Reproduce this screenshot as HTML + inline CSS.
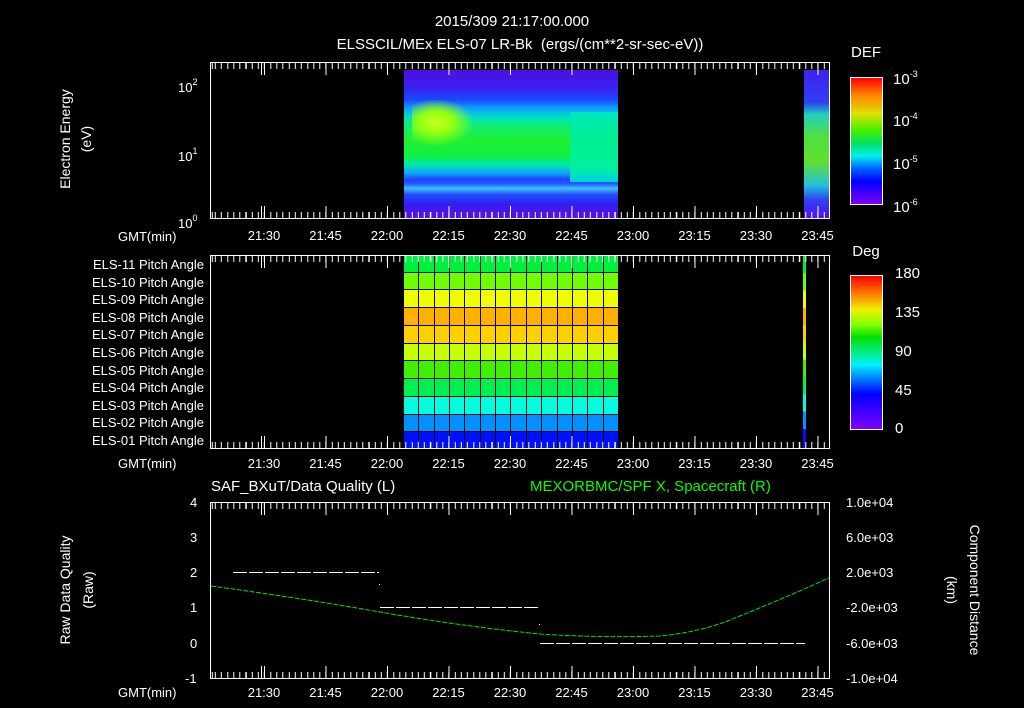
<!DOCTYPE html>
<html><head><meta charset="utf-8"><style>
body{margin:0;background:#000;width:1024px;height:708px;overflow:hidden;position:relative;font-family:"Liberation Sans",sans-serif;color:#fff}
.t{position:absolute;white-space:nowrap;font-size:13px;line-height:13px}
.c{transform:translateX(-50%)}
.frame{position:absolute;border:1px solid #fff;box-sizing:border-box}
.tk{position:absolute;left:0;right:0;height:6px;background-image:repeating-linear-gradient(to right,#fff 0 1px,transparent 1px 6.15px);background-position:3.8px 0}
.tm{position:absolute;left:0;right:0;height:12px;background-image:repeating-linear-gradient(to right,#fff 0 1px,transparent 1px 61.5px);background-position:53px 0}
.rot{position:absolute;transform:rotate(-90deg);transform-origin:center;white-space:nowrap;font-size:14px;text-align:center}
.rot2{position:absolute;transform:rotate(90deg);transform-origin:center;white-space:nowrap;font-size:14px;text-align:center}
sup{font-size:9px;vertical-align:7px}
</style></head><body>
<div class="t c" style="left:512px;top:15px;font-size:15px">2015/309 21:17:00.000</div>
<div class="t c" style="left:520px;top:38px;font-size:15px">ELSSCIL/MEx ELS-07 LR-Bk &nbsp;(ergs/(cm**2-sr-sec-eV))</div>

<!-- top panel -->
<div style="position:absolute;left:404px;top:70px;width:214px;height:148px;background:
linear-gradient(to bottom,#4a10e0 0%,#3a20f0 12%,#1848ff 20%,#10a0ff 26%,#00e0c0 32%,#10f070 38%,#20f030 48%,#10f040 58%,#00e8b0 64%,#10a0ff 70%,#2040ff 74%,#2060ff 77%,#40c0ff 80%,#2050ff 84%,#3020f0 90%,#5a10e0 100%)"></div>
<div style="position:absolute;left:412px;top:100px;width:60px;height:45px;background:radial-gradient(ellipse at 40% 50%,#c8ff20 0%,#90ff10 35%,rgba(60,255,40,0) 75%)"></div>
<div style="position:absolute;left:570px;top:112px;width:48px;height:70px;background:linear-gradient(#00e8c0,#00f090 40%,#00f0a0 80%,#00d0e0)"></div>
<div style="position:absolute;left:804px;top:70px;width:25px;height:148px;background:linear-gradient(to bottom,#4020f0 0%,#3040f0 22%,#20d0c0 30%,#50e040 45%,#60e030 62%,#20c0e0 78%,#3040f0 88%,#5010f0 100%)"></div>
<div class="frame" style="left:210px;top:62px;width:620px;height:157px">
 <div class="tk" style="top:0"></div><div class="tm" style="top:0"></div>
 <div class="tk" style="bottom:0"></div><div class="tm" style="bottom:0"></div>
</div>
<div class="t" style="left:178px;top:76px">10<sup>2</sup></div>
<div class="t" style="left:178px;top:145px">10<sup>1</sup></div>
<div class="t" style="left:178px;top:212px">10<sup>0</sup></div>
<div class="rot" style="left:5px;top:131px;width:120px">Electron Energy</div>
<div class="rot" style="left:56px;top:131px;width:60px">(eV)</div>
<div class="t" style="left:118px;top:230px">GMT(min)</div>
<div id="ax1"></div>

<div class="t c" style="left:866px;top:46px;font-size:15px">DEF</div>
<div style="position:absolute;left:850px;top:77px;width:33px;height:128px;box-sizing:border-box;border:1px solid #fff;background:linear-gradient(to bottom,#ff0000,#ff8000 13%,#e0e000 28%,#40f000 42%,#00e060 52%,#00f0f0 62%,#0060ff 72%,#0000ff 82%,#8000ff 100%)"></div>
<div class="t" style="left:893px;top:68px;font-size:15px">10<sup>-3</sup></div>
<div class="t" style="left:893px;top:110px;font-size:15px">10<sup>-4</sup></div>
<div class="t" style="left:893px;top:153px;font-size:15px">10<sup>-5</sup></div>
<div class="t" style="left:893px;top:196px;font-size:15px">10<sup>-6</sup></div>

<!-- pitch panel -->
<div style="position:absolute;left:404px;top:255px;width:214px;height:194px;display:grid;grid-template-columns:repeat(14,1fr);grid-template-rows:repeat(11,1fr);gap:1px;background:#000" id="grid"></div>
<div style="position:absolute;left:803px;top:256px;width:3px;height:192px;background:linear-gradient(to bottom,#00f040 0 9%,#70ff00 9% 18%,#f0ff00 18% 27%,#ffb000 27% 36%,#ffd000 36% 45%,#c8ff00 45% 54%,#40f000 54% 63%,#00f050 63% 72%,#00ffe0 72% 81%,#0090ff 81% 90%,#0010ff 90%)"></div>
<div class="frame" style="left:210px;top:255px;width:620px;height:194px">
 <div class="tk" style="top:0"></div><div class="tm" style="top:0"></div>
 <div class="tk" style="bottom:0"></div><div class="tm" style="bottom:0"></div>
</div>
<div id="pl"></div>
<div class="t" style="left:118px;top:457px">GMT(min)</div>
<div class="t c" style="left:866px;top:245px;font-size:15px">Deg</div>
<div style="position:absolute;left:850px;top:275px;width:33px;height:155px;box-sizing:border-box;border:1px solid #fff;background:linear-gradient(to bottom,#ff0000,#ff8000 12%,#f0f000 22%,#80ff00 32%,#00e000 40%,#00f0a0 52%,#00f0ff 58%,#0080ff 67%,#0000ff 77%,#8000ff 100%)"></div>
<div class="t" style="left:895px;top:267px;font-size:15px">180</div>
<div class="t" style="left:895px;top:306px;font-size:15px">135</div>
<div class="t" style="left:895px;top:345px;font-size:15px">90</div>
<div class="t" style="left:895px;top:384px;font-size:15px">45</div>
<div class="t" style="left:895px;top:422px;font-size:15px">0</div>

<!-- bottom panel -->
<div class="t" style="left:211px;top:480px;font-size:15px">SAF_BXuT/Data Quality (L)</div>
<div class="t" style="left:530px;top:480px;font-size:15px;color:#00ff00">MEXORBMC/SPF X, Spacecraft (R)</div>
<div class="frame" style="left:210px;top:502px;width:620px;height:177px">
 <div class="tk" style="top:0"></div><div class="tm" style="top:0"></div>
 <div class="tk" style="bottom:0"></div><div class="tm" style="bottom:0"></div>
</div>
<svg style="position:absolute;left:0;top:0" width="1024" height="708">
 <g stroke="#fff" stroke-width="1">
  <line x1="233" y1="572.5" x2="379" y2="572.5" stroke-dasharray="14,2"/>
  <line x1="380" y1="607.5" x2="539" y2="607.5" stroke-dasharray="14,2"/>
  <line x1="540" y1="643.5" x2="805" y2="643.5" stroke-dasharray="14,2"/>
 </g>
 <rect x="379" y="584" width="1" height="1" fill="#fff"/>
 <rect x="539" y="624" width="1" height="1" fill="#fff"/>
 <path d="M211 586 Q300 598 380 612 T540 634 Q600 638 660 636 Q700 632 730 620 Q780 600 829 578" fill="none" stroke="#00e000" stroke-width="1" stroke-dasharray="5,1.5"/>
</svg>
<div class="t" style="left:190px;top:496px">4</div>
<div class="t" style="left:190px;top:531px">3</div>
<div class="t" style="left:190px;top:566px">2</div>
<div class="t" style="left:190px;top:601px">1</div>
<div class="t" style="left:190px;top:637px">0</div>
<div class="t" style="left:185px;top:672px">-1</div>
<div class="t" style="left:846px;top:496px">1.0e+04</div>
<div class="t" style="left:846px;top:531px">6.0e+03</div>
<div class="t" style="left:846px;top:566px">2.0e+03</div>
<div class="t" style="left:846px;top:601px">-2.0e+03</div>
<div class="t" style="left:846px;top:637px">-6.0e+03</div>
<div class="t" style="left:846px;top:672px">-1.0e+04</div>
<div class="rot" style="left:5px;top:582px;width:120px">Raw Data Quality</div>
<div class="rot" style="left:58px;top:582px;width:60px">(Raw)</div>
<div class="rot2" style="left:905px;top:582px;width:140px">Component Distance</div>
<div class="rot2" style="left:922px;top:582px;width:60px">(km)</div>
<div class="t" style="left:118px;top:686px">GMT(min)</div>

<script>
var times=["21:30","21:45","22:00","22:15","22:30","22:45","23:00","23:15","23:30","23:45"];
var h="";
[229,457,686].forEach(function(y){times.forEach(function(s,i){var x=264+i*61.5;h+='<div class="t c" style="left:'+x+'px;top:'+y+'px">'+s+'</div>';});});
document.getElementById("ax1").innerHTML=h;
var cols=["#00f040","#70ff00","#f0ff00","#ffb000","#ffd000","#c8ff00","#40f000","#00f050","#00ffe0","#0090ff","#0010ff"];
var g="";cols.forEach(function(c){for(var i=0;i<14;i++)g+='<div style="background:'+c+'"></div>';});
document.getElementById("grid").innerHTML=g;
var p="";for(var i=0;i<11;i++){var n=11-i;p+='<div class="t" style="right:820px;top:'+(258+i*17.6)+'px">ELS-'+(n<10?"0"+n:n)+' Pitch Angle</div>';}
document.getElementById("pl").innerHTML=p;
</script>
</body></html>
